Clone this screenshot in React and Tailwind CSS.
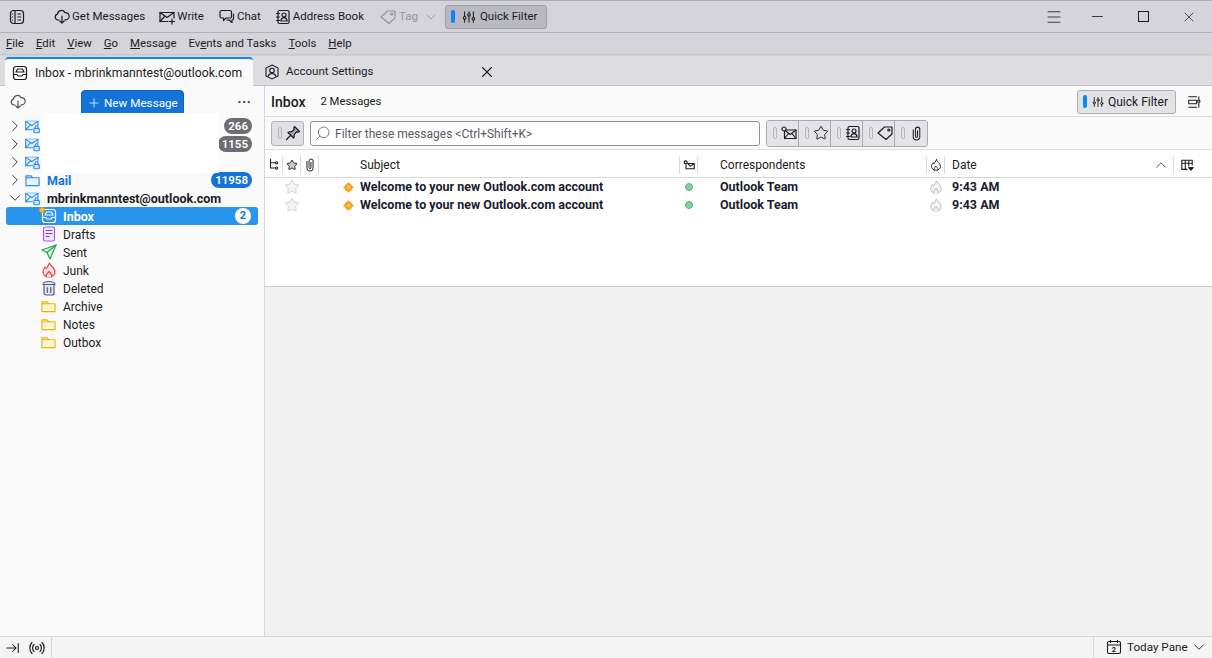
import {
  ChevronDown,
  ChevronRight,
  ChevronUp,
  Ellipsis,
  Menu,
  Minus,
  Plus,
  Search,
  Star,
  X,
} from "lucide-react";

const Ico = ({ children, className = "w-4 h-4", stroke = "currentColor", fill = "none", sw = 1.2 }) => (
  <svg viewBox="0 0 16 16" className={`${className} shrink-0`} fill={fill} stroke={stroke} strokeWidth={sw} strokeLinecap="round" strokeLinejoin="round">
    {children}
  </svg>
);

const CloudDown = (p) => (
  <Ico {...p}>
    <path d="M5 11H4a3 3 0 0 1-.5-5.900A4 4 0 0 1 11 3.600 3.300 3.300 0 0 1 12 10.900h-1" />
    <path d="M8 7v7M5.800 12 8 14.200 10.200 12" />
  </Ico>
);
const Compose = () => (
  <Ico>
    <path d="M9 12.500H1v-9h14V9" />
    <path d="m1 3.500 7 5 7-5M1 12.500 6 7" />
    <path d="M13 10v5M10.500 12.500h5" />
  </Ico>
);
const ReadIco = () => (
  <Ico className="w-4 h-4">
    <rect x="3.500" y="5" width="11.500" height="8.500" rx=".5" />
    <path d="m3.500 5 5.700 4.500L15 5M3.500 13.500 7.500 8.500M15 13.500l-4-5" />
    <circle cx="3" cy="4" r="2" fill="#e4e4e8" />
  </Ico>
);
const ChatIco = () => (
  <Ico>
    <path d="M2.500 1.500h8.500A1.500 1.500 0 0 1 12.500 3v4.500A1.500 1.500 0 0 1 11 9H7l-2.500 2.500V9h-2A1.500 1.500 0 0 1 1 7.500V3a1.500 1.500 0 0 1 1.500-1.500z" />
    <path d="M14.500 5v4.500A1.500 1.500 0 0 1 13 11v2.500L10 11H8" />
  </Ico>
);
const BookIco = ({ className }) => (
  <Ico className={className}>
    <rect x="3" y="1.500" width="11" height="13" rx="1.500" />
    <path d="M1.500 4.500h3M1.500 8h3M1.500 11.500h3" />
    <circle cx="9" cy="6" r="2" />
    <path d="M5.800 12c.3-2.200 1.500-3.300 3.200-3.300s2.900 1.100 3.200 3.300z" />
  </Ico>
);
const TagIco = ({ className }) => (
  <Ico className={className}>
    <path d="M1 8.500 7.500 2.500H15v7L9 15z" transform="translate(0 -.5)" />
    <circle cx="11.800" cy="5" r="1" />
  </Ico>
);
const ClipIco = ({ className = "w-[15px] h-[15px]" }) => (
  <Ico className={className} sw={1.1}>
    <path d="M4.500 4v7.500a3.500 3.500 0 0 0 7 0V3.500a2.300 2.300 0 0 0-4.600 0v7.500a1.100 1.100 0 0 0 2.200 0V5" />
  </Ico>
);
const Sliders = ({ className = "w-4 h-4" }) => (
  <Ico className={className}>
    <path d="M3 2v5M3 11v3M8 2v1.500M8 7.500V14M13 2v6M13 12v2" />
    <circle cx="3" cy="9" r="1.500" />
    <circle cx="8" cy="5.500" r="1.500" />
    <circle cx="13" cy="10" r="1.500" />
  </Ico>
);
const PinIco = () => (
  <Ico className="w-4 h-4">
    <path d="M9.500 1.500 14.500 6.500 13 7.200 11.500 6.800 9 10c.5 1.500.3 2.300-.5 3L3 7.500c.8-.8 1.600-1 3-.5l3.200-2.500L8.800 3z" fill="#a8a8b0" />
    <path d="M5.500 10.500 1.500 14.500" />
  </Ico>
);
const InboxIco = ({ className = "w-4 h-4", stroke = "currentColor" }) => (
  <Ico className={className} stroke={stroke}>
    <rect x="1.500" y="1.500" width="13" height="13" rx="2.500" />
    <path d="M1.500 9.500h3.500l1 1.500h4l1-1.500h3.500M4 7l1.500-3h5L12 7z" />
  </Ico>
);
const AccountIco = () => (
  <Ico stroke="#2b8ae8" fill="#e3f0fc" className="w-[15px] h-[15px]">
    <path d="M8 11.500H.8V2.500h13V7" />
    <path d="m.8 2.500 6.500 4.500 6.500-4.500M.8 11.500 5.500 6.500" />
    <rect x="9.500" y="10" width="5.700" height="4.700" rx=".8" fill="#d5e9fb" />
    <path d="M10.800 10V8.700a1.500 1.500 0 0 1 3 0V10" fill="none" />
  </Ico>
);
const FolderIco = ({ stroke = "#efb400", fill = "#fff6d8" }) => (
  <Ico stroke={stroke} fill={fill} className="w-[15px] h-[15px]">
    <path d="M1 3h5.500L8 5h7v8.500H1z" />
    <path d="M1 5h7" />
  </Ico>
);
const DraftIco = () => (
  <Ico stroke="#a855f7" fill="#f3e8ff">
    <rect x="2.500" y="1" width="11" height="14" rx="1.500" />
    <path d="M5 4.500h6M5 7.500h6M5 10.500h3" stroke="#7c3aed" />
  </Ico>
);
const SentIco = () => (
  <Ico stroke="#22a559" fill="#d6f5e3">
    <path d="M15 1 1 6l5 2.500 3 6.500z" />
    <path d="M15 1 6 8.500" />
  </Ico>
);
const JunkIco = ({ stroke = "#e5484d", fill = "#fde2e2", className = "w-4 h-4" }) => (
  <Ico stroke={stroke} fill={fill} className={className}>
    <path d="M8.500 1c.5 2.500 5.500 4.500 5.500 9a6 5 0 0 1-12 0c0-2 1-3.500 2-5 .5 1 1 1.500 1.500 1.500C6.500 5 7.500 3 8.500 1z" />
    <path d="M5.500 15c-.8-1.500.5-3.500 2.500-5.500 2 2 3.300 4 2.500 5.500" />
  </Ico>
);
const TrashIco = () => (
  <Ico stroke="#5b5b86" fill="#e2e2ef">
    <path d="M3 4.500h10V13a2 2 0 0 1-2 2H5a2 2 0 0 1-2-2z" />
    <path d="M2 4.500c0-2 2-3 6-3s6 1 6 3zM6.300 7.500v5M9.700 7.500v5" />
  </Ico>
);
const ThreadIco = () => (
  <Ico className="w-3.5 h-3.5">
    <path d="M4 1.500v10h5M4 5.500h5" />
    <circle cx="11" cy="5.500" r="1.300" />
    <circle cx="11" cy="11.500" r="1.300" />
  </Ico>
);
const UnreadDot = () => (
  <svg viewBox="0 0 12 12" className="w-[11px] h-[11px]">
    <path d="M6 0 8 2.500h1.500V4L12 6 9.500 8v1.500H8L6 12 4 9.500H2.500V8L0 6l2.500-2V2.500H4z" fill="#f7a11a" />
    <circle cx="6" cy="6" r="2.300" fill="#fdba5c" />
  </svg>
);
const CalendarIco = () => (
  <svg viewBox="0 0 16 16" className="w-4 h-4 shrink-0" fill="none" stroke="currentColor" strokeWidth="1.100">
    <rect x="1.500" y="2.500" width="13" height="12" rx="1.500" />
    <path d="M1.500 6h13M4.500 1v3M11.500 1v3" />
    <text x="8" y="13.200" fontSize="7.500" fontWeight="700" textAnchor="middle" fill="currentColor" stroke="none">2</text>
  </svg>
);

const ToolBtn = ({ icon, label, className = "" }) => (
  <div className={`flex items-center gap-[2px] ${className}`}>
    {icon}
    <span>{label}</span>
  </div>
);

const Toggle = ({ children }) => (
  <div className="flex items-center gap-1 h-[25px] w-8 pl-[6px] border-r border-[#a9a9b2] last:border-r-0 bg-[#e4e4e8]">
    <span className="w-[4px] h-3 rounded-sm bg-[#e4e4e8] border border-[#b5b5bd] shrink-0"></span>
    {children}
  </div>
);

const AccountRow = ({ open, icon, label, count, className = "", countBg = "bg-[#6e6d72]" }) => (
  <div className="flex items-center h-[18px] pl-[6px] pr-[12px]">
    {open ? <ChevronDown className="w-[18px] h-[18px] text-[#333] shrink-0" strokeWidth={1.3} /> : <ChevronRight className="w-[18px] h-[18px] text-[#333] shrink-0" strokeWidth={1.3} />}
    <span className="ml-px w-[22px] shrink-0">{icon}</span>
    <span className={`flex-1 pt-[2px] text-[12.500px] ${className}`}>{label}</span>
    {count && <span className={`${countBg} text-white font-semibold rounded-full px-[4px] h-4 leading-4 text-[11.500px]`}>{count}</span>}
  </div>
);

const FolderRow = ({ icon, label }) => (
  <div className="flex items-center h-[18px] pl-[41px]">
    <span className="w-[22px] shrink-0">{icon}</span>
    <span className="pt-px">{label}</span>
  </div>
);

const MessageRow = () => (
  <div className="flex items-center h-[18px] font-bold text-[12.500px] text-[#1b1b2f]">
    <div className="w-[18px]"></div>
    <div className="w-[18px] flex justify-center">
      <Star className="w-4 h-4 text-[#c9c9cc]" strokeWidth={1.2} fill="#f3f3f4" />
    </div>
    <div className="w-[18px]"></div>
    <div className="w-[361px] flex items-center pl-6">
      <UnreadDot />
      <span className="ml-[6px]">Welcome to your new Outlook.com account</span>
    </div>
    <div className="w-[18px] flex justify-center">
      <span className="w-2 h-2 rounded-full bg-[#86d19f] border border-[#52b878]"></span>
    </div>
    <div className="w-[229px] pl-[22px]">Outlook Team</div>
    <div className="w-[18px] flex justify-center">
      <JunkIco stroke="#c8c8cc" fill="#f4f4f5" className="w-[14px] h-[14px]" />
    </div>
    <div className="pl-[7px]">9:43 AM</div>
  </div>
);

export default function App() {
  return (
    <div className="w-[1212px] h-[658px] flex flex-col overflow-hidden text-[12px] text-[#1c1b22] bg-white font-['Roboto','Noto_Sans',sans-serif]">
      {/* title bar */}
      <div className="flex items-center h-[33px] shrink-0 text-[11.500px] bg-[#d4d4da] border-t border-[#a9aeb6] border-b border-b-[#b3b3b9] pl-[9px]">
        <svg viewBox="0 0 16 16" className="w-4 h-4 shrink-0" fill="none" stroke="currentColor" strokeWidth="1.200">
          <rect x="1.500" y="1.500" width="13" height="13" rx="3" />
          <path d="M6 1.500v13M8.500 5h3.500M8.500 8h3.500M8.500 11h3.500M3 5h1M3 8h1M3 11h1" />
        </svg>
        <ToolBtn className="ml-[29px]" icon={<CloudDown />} label="Get Messages" />
        <ToolBtn className="ml-[14px]" icon={<Compose />} label="Write" />
        <ToolBtn className="ml-[15px]" icon={<ChatIco />} label="Chat" />
        <ToolBtn className="ml-[14px]" icon={<BookIco />} label="Address Book" />
        <div className="flex items-center gap-[3px] ml-4 text-[#94949a]">
          <TagIco />
          <span>Tag</span>
          <ChevronDown className="w-4 h-4 ml-0.5" strokeWidth={1.2} />
        </div>
        <div className="flex items-center gap-[7px] ml-1.5 w-[102px] h-[24px] pl-[5px] rounded-[3px] bg-[#b9b9c1] border border-[#9c9ca5]">
          <span className="w-[4px] h-[13px] bg-[#0b84ff] rounded-sm"></span>
          <div className="flex items-center gap-1 whitespace-nowrap">
            <Sliders className="w-[14px] h-[14px]" />
            <span>Quick Filter</span>
          </div>
        </div>
        <div className="flex-1"></div>
        <Menu className="w-[18px] h-[18px] mr-[26px]" strokeWidth={1.1} />
        <Minus className="w-[17px] h-[17px] mr-[32px]" strokeWidth={1.2} />
        <div className="w-[11px] h-[11px] mr-8 border border-[#1c1b22]"></div>
        <X className="w-4 h-4 mr-[15px]" strokeWidth={1.1} />
      </div>

      {/* menu bar */}
      <div className="flex items-center gap-3 h-[21px] shrink-0 px-1.5 pt-px text-[11.400px] bg-[#d4d4da] shadow-[0_1px_2px_rgba(0,0,0,0.15)] z-10">
        <span><u>F</u>ile</span>
        <span><u>E</u>dit</span>
        <span><u>V</u>iew</span>
        <span><u>G</u>o</span>
        <span><u>M</u>essage</span>
        <span>Ev<u>e</u>nts and Tasks</span>
        <span><u>T</u>ools</span>
        <span><u>H</u>elp</span>
      </div>

      {/* tabs */}
      <div className="flex items-end h-[32px] shrink-0 bg-[#dcdce1] pl-[5px] border-b border-[#c4c4c8]">
        <div className="flex items-center gap-[7px] h-[29px] w-[248px] -mb-px pl-[7px] pt-px text-[12.200px] bg-[#fafafa] rounded-t border-t-2 border-[#0b84ff] whitespace-nowrap">
          <InboxIco />
          <span>Inbox - mbrinkmanntest@outlook.com</span>
        </div>
        <div className="flex items-center h-[29px] w-[243px] pl-[11px] pt-[2px] text-[11.500px]">
          <svg viewBox="0 0 16 16" className="w-4 h-4 shrink-0" fill="none" stroke="currentColor" strokeWidth="1.100">
            <path d="M8 1 14 4v8l-6 3-6-3V4z" />
            <circle cx="8" cy="6.500" r="2.300" />
            <path d="M4 12.500c.5-2 2-3 4-3s3.500 1 4 3" />
          </svg>
          <span className="ml-1.5 flex-1">Account Settings</span>
          <X className="w-[18px] h-[18px]" strokeWidth={1.5} />
        </div>
      </div>

      {/* main */}
      <div className="flex flex-1 min-h-0">
        {/* folder pane */}
        <div className="relative w-[265px] shrink-0 bg-[#fafafa] border-r border-[#d7d7db]">
          <div className="flex items-center h-[27px] pl-[10px] pr-3">
            <CloudDown className="w-4 h-4 mt-[4px] text-[#55555c]" />
            <div className="flex items-center ml-[55px] w-[103px] h-[27px] mt-[7px] bg-[#1373d9] border border-[#0d5fb8] rounded-t-sm text-white text-[11.700px] pl-[5px]">
              <Plus className="w-3.5 h-3.5" strokeWidth={1.3} />
              <span className="ml-[3px] pt-px whitespace-nowrap">New Message</span>
            </div>
            <div className="flex-1"></div>
            <Ellipsis className="w-4 h-4 mt-[4px] text-[#333]" strokeWidth={1.5} />
          </div>
          <div className="pt-1">
            <AccountRow icon={<AccountIco />} label="" count="266" />
            <AccountRow icon={<AccountIco />} label="" count="1155" />
            <AccountRow icon={<AccountIco />} label="" />
            <AccountRow icon={<FolderIco stroke="#2b8ae8" fill="#e8f3fd" />} label="Mail" className="font-bold text-[#1373d9]" count="11958" countBg="bg-[#1373d9]" />
            <AccountRow open icon={<AccountIco />} label="mbrinkmanntest@outlook.com" className="font-bold" />
            <div className="relative flex items-center h-[18px] ml-1.5 mr-1.5 pl-[35px] pr-[7px] bg-[#2a95ed] rounded-[3px] text-white font-bold text-[12.500px]">
              <span className="w-[22px] shrink-0">
                <InboxIco stroke="#ffffff" />
              </span>
              <span className="flex-1 pt-[2px]">Inbox</span>
              <span className="w-4 h-4 rounded-full bg-white text-[#1373d9] text-center leading-4 text-[11px]">2</span>
              <span className="absolute left-[33px] top-0 w-[6px] h-[6px] rounded-full bg-[#fbbf24] border border-[#f59e0b]"></span>
            </div>
            <FolderRow icon={<DraftIco />} label="Drafts" />
            <FolderRow icon={<SentIco />} label="Sent" />
            <FolderRow icon={<JunkIco />} label="Junk" />
            <FolderRow icon={<TrashIco />} label="Deleted" />
            <FolderRow icon={<FolderIco />} label="Archive" />
            <FolderRow icon={<FolderIco />} label="Notes" />
            <FolderRow icon={<FolderIco />} label="Outbox" />
          </div>
          {/* blanked out account names */}
          <div className="absolute left-[42px] top-[27px] w-[177px] h-[60px] bg-white"></div>
        </div>

        {/* message pane */}
        <div className="flex-1 min-w-0 flex flex-col bg-[#f0f0f0]">
          <div className="flex items-center h-[31px] shrink-0 pl-1.5 pr-[11px] pt-[1px] bg-[#fafafa] border-b border-[#dedee0]">
            <span className="pt-[2px] text-[14px] font-medium">Inbox</span>
            <span className="ml-[15px] pt-[2px] text-[11.300px]">2 Messages</span>
            <div className="flex-1"></div>
            <div className="flex items-center gap-[5px] w-[99px] h-[24px] pl-[5px] rounded-[3px] bg-[#e3e3e6] border border-[#adadb3] whitespace-nowrap">
              <span className="w-[4px] h-[13px] bg-[#0b84ff] rounded-sm"></span>
              <div className="flex items-center gap-1">
                <Sliders className="w-3 h-3" />
                <span className="pt-px">Quick Filter</span>
              </div>
            </div>
            <Ico className="w-[14px] h-[14px] ml-[11px]">
              <path d="M2 2h9M2 14h9M2 6h9v4H2zM13.500 2v3M13.500 9v5" />
              <circle cx="13.500" cy="7" r="1.300" />
            </Ico>
          </div>

          <div className="flex items-center h-[33px] shrink-0 pl-1.5 bg-[#fafafa] border-b border-[#dedee0]">
            <div className="flex items-center h-[25px] w-[33px] pl-[6px] gap-[3px] rounded-[3px] bg-[#e0e0e4] border border-[#b0b0b6]">
              <span className="w-[4px] h-3 rounded-sm bg-[#e0e0e4] border border-[#b5b5bd] shrink-0"></span>
              <PinIco />
            </div>
            <div className="flex items-center h-[25px] w-[450px] ml-[6px] pl-1 bg-white border border-[#8f8f9d] rounded-[3px] text-[#5b5b66]">
              <Search className="w-4 h-4 -scale-x-100 mr-[4px]" strokeWidth={1.2} />
              <span className="pt-px">Filter these messages &lt;Ctrl+Shift+K&gt;</span>
            </div>
            <div className="flex ml-[6px] rounded-[3px] overflow-hidden border border-[#a9a9b2]">
              <Toggle>
                <ReadIco />
              </Toggle>
              <Toggle>
                <Star className="w-4 h-4" strokeWidth={1.4} />
              </Toggle>
              <Toggle>
                <BookIco className="w-4 h-4" />
              </Toggle>
              <Toggle>
                <TagIco className="w-4 h-4" />
              </Toggle>
              <Toggle>
                <ClipIco />
              </Toggle>
            </div>
          </div>

          <div className="flex items-center h-[28px] shrink-0 pt-[2px] bg-white border-b border-[#d7d7db]">
            <div className="w-[18px] h-[18px] flex items-center justify-center border-r border-[#dcdce0]"><ThreadIco /></div>
            <div className="w-[18px] h-[18px] flex items-center justify-center border-r border-[#dcdce0]"><Star className="w-3 h-3" strokeWidth={1.8} fill="#c9c9d1" /></div>
            <div className="w-[18px] h-[18px] flex items-center justify-center border-r border-[#dcdce0]"><ClipIco className="w-3.5 h-3.5" /></div>
            <div className="w-[361px] h-[18px] pl-[41px] leading-[18px] border-r border-[#dcdce0]">Subject</div>
            <div className="w-[18px] h-[18px] flex items-center justify-center border-r border-[#dcdce0]">
              <Ico className="w-3 h-3" sw={1.5}>
                <path d="M6 6h9v7H4V8M6 6l4 3.500L15 6" />
                <circle cx="3.500" cy="4.500" r="2" />
              </Ico>
            </div>
            <div className="w-[229px] h-[18px] pl-[22px] leading-[18px] border-r border-[#dcdce0]">Correspondents</div>
            <div className="w-[18px] h-[18px] flex items-center justify-center border-r border-[#dcdce0]">
              <JunkIco stroke="currentColor" fill="none" className="w-3 h-3" />
            </div>
            <div className="w-[229px] h-[18px] pl-[7px] flex items-center border-r border-[#dcdce0]">
              <span className="flex-1">Date</span>
              <ChevronUp className="w-[18px] h-[18px] mr-[3px] text-[#444]" strokeWidth={1.2} />
            </div>
            <Ico className="w-3.5 h-3.5 ml-1.5">
              <path d="M8 13H2V2.500h12V8M2 6h12M6 2.500V13M10 2.500V9" />
              <path d="m10 11 2.500 3 2.500-3z" fill="currentColor" />
            </Ico>
          </div>

          <div className="h-[109px] shrink-0 bg-white border-b border-[#cfcfd3]">
            <MessageRow />
            <MessageRow />
          </div>
          <div className="flex-1"></div>
        </div>
      </div>

      {/* status bar */}
      <div className="flex items-center h-[22px] shrink-0 bg-[#f4f4f5] border-t border-[#d7d7db]">
        <Ico className="w-[14px] h-[14px] ml-[6px]">
          <path d="M1 8h10M7.500 4 11.500 8l-4 4M14 3v10" />
        </Ico>
        <Ico className="w-4 h-4 ml-[9px]">
          <circle cx="8" cy="8" r="1.500" />
          <path d="M5 4.500a5 5 0 0 0 0 7M11 4.500a5 5 0 0 1 0 7M3 2.500a8 8 0 0 0 0 11M13 2.500a8 8 0 0 1 0 11" />
        </Ico>
        <div className="w-px h-[21px] bg-[#d7d7db] ml-[6px]"></div>
        <div className="flex-1"></div>
        <div className="w-px h-[21px] bg-[#d7d7db]"></div>
        <div className="flex items-center w-[118px] pl-[12px] text-[11.700px]">
          <CalendarIco />
          <span className="ml-[5px] pt-px flex-1 whitespace-nowrap">Today Pane</span>
          <ChevronDown className="w-[18px] h-[18px] mr-1" strokeWidth={1.2} />
        </div>
      </div>
    </div>
  );
}
